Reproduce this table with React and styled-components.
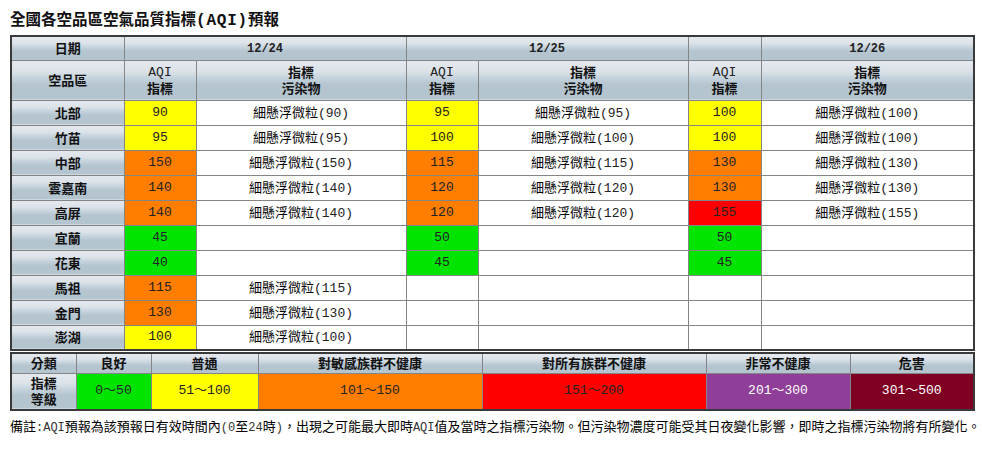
import React from "react";
import styled, { createGlobalStyle } from "styled-components";

const CJK = `"Noto Sans CJK TC", sans-serif`;
const MONO = `"Liberation Mono", "Noto Sans CJK TC", monospace`;

const Global = createGlobalStyle`
  html, body { margin: 0; padding: 0; background: #ffffff; }
  body { font-family: ${CJK}; color: #000; }
`;

const Page = styled.div`
  padding: 8px 0 0 10px;
  width: 963px;
`;

const Title = styled.h1`
  margin: 0 0 4px;
  font: bold 15.5px/20px ${CJK};
  color: #111;
  white-space: nowrap;
`;

const TitleLatin = styled.span`
  font-family: ${MONO};
  font-size: 16px;
  letter-spacing: 0.8px;
`;

const Table = styled.table`
  width: 963px;
  table-layout: fixed;
  border-collapse: collapse;
  border: 2px solid #3a3a3a;
  margin-top: ${(p) => p.$gap || 0}px;
`;

const Row = styled.tr`
  height: ${(p) => p.$h}px;
`;

const headerBg = `linear-gradient(to bottom, #e4e9ef 0%, #dbe2e8 28%, #c2d0da 48%, #b4c5d0 62%, #b4c5d0 100%)`;

const Head = styled.th`
  border: 1px solid #858585;
  background: ${headerBg};
  padding: 0;
  font: bold 13px/16px ${CJK};
  color: #111;
  text-align: center;
  vertical-align: middle;
`;

const DateText = styled.span`
  font: bold 12px/16px ${MONO};
  color: #222;
`;

const MonoLine = styled.span`
  display: block;
  font: 13px/15px ${MONO};
  font-weight: normal;
  color: #222;
`;

const Cell = styled.td`
  border: 1px solid #858585;
  background: ${(p) => p.$bg || "#ffffff"};
  padding: 0;
  text-align: center;
  vertical-align: middle;
  font: 13px/16px ${MONO};
  color: ${(p) => p.$fg || "#222"};
  white-space: nowrap;
`;

const Pollutant = styled.span`
  font-family: ${CJK};
  color: #000;
`;

const Note = styled.p`
  margin: 6px 0 0;
  font: 13px/18px ${CJK};
  color: #000;
  white-space: nowrap;
`;

const NoteLatin = styled.span`
  font: 12px/18px ${MONO};
  color: #333;
`;

const COLORS = {
  good: "#00e400",
  moderate: "#ffff00",
  usg: "#ff7e00",
  unhealthy: "#ff0000",
  very: "#8f3f97",
  hazard: "#7e0023",
};

const colorFor = (v) => {
  if (v == null) return "#ffffff";
  if (v <= 50) return COLORS.good;
  if (v <= 100) return COLORS.moderate;
  if (v <= 150) return COLORS.usg;
  if (v <= 200) return COLORS.unhealthy;
  if (v <= 300) return COLORS.very;
  return COLORS.hazard;
};

const P = "細懸浮微粒";

const regions = [
  ["北部", [[90, true], [95, true], [100, true]]],
  ["竹苗", [[95, true], [100, true], [100, true]]],
  ["中部", [[150, true], [115, true], [130, true]]],
  ["雲嘉南", [[140, true], [120, true], [130, true]]],
  ["高屏", [[140, true], [120, true], [155, true]]],
  ["宜蘭", [[45, false], [50, false], [50, false]]],
  ["花東", [[40, false], [45, false], [45, false]]],
  ["馬祖", [[115, true], [null, false], [null, false]]],
  ["金門", [[130, true], [null, false], [null, false]]],
  ["澎湖", [[100, true], [null, false], [null, false]]],
];

const legend = [
  ["良好", "0～50", COLORS.good, "#222"],
  ["普通", "51～100", COLORS.moderate, "#222"],
  ["對敏感族群不健康", "101～150", COLORS.usg, "#222"],
  ["對所有族群不健康", "151～200", COLORS.unhealthy, "#222"],
  ["非常不健康", "201～300", COLORS.very, "#ffffff"],
  ["危害", "301～500", COLORS.hazard, "#ffffff"],
];

const mainCols = [113, 72, 210, 72, 210, 73, 213];
const legendCols = [65, 75, 107, 224, 224, 144, 124];

export default function App() {
  return (
    <>
      <Global />
      <Page>
        <Title>
          全國各空品區空氣品質指標<TitleLatin>(AQI)</TitleLatin>預報
        </Title>
        <Table>
          <colgroup>
            {mainCols.map((w, i) => (
              <col key={i} style={{ width: w }} />
            ))}
          </colgroup>
          <thead>
            <Row $h={24}>
              <Head>日期</Head>
              <Head colSpan={2}>
                <DateText>12/24</DateText>
              </Head>
              <Head colSpan={2}>
                <DateText>12/25</DateText>
              </Head>
              <Head />
              <Head>
                <DateText>12/26</DateText>
              </Head>
            </Row>
            <Row $h={40}>
              <Head>空品區</Head>
              {[0, 1, 2].map((i) => (
                <React.Fragment key={i}>
                  <Head>
                    <MonoLine>AQI</MonoLine>指標
                  </Head>
                  <Head>
                    指標
                    <br />
                    污染物
                  </Head>
                </React.Fragment>
              ))}
            </Row>
          </thead>
          <tbody>
            {regions.map(([name, days]) => (
              <Row $h={25} key={name}>
                <Head>{name}</Head>
                {days.map(([v, hasP], i) => (
                  <React.Fragment key={i}>
                    <Cell $bg={colorFor(v)}>{v ?? ""}</Cell>
                    <Cell>
                      {hasP ? (
                        <>
                          <Pollutant>{P}</Pollutant>({v})
                        </>
                      ) : null}
                    </Cell>
                  </React.Fragment>
                ))}
              </Row>
            ))}
          </tbody>
        </Table>
        <Table $gap={1}>
          <colgroup>
            {legendCols.map((w, i) => (
              <col key={i} style={{ width: w }} />
            ))}
          </colgroup>
          <tbody>
            <Row $h={20}>
              <Head>分類</Head>
              {legend.map(([label]) => (
                <Head key={label}>{label}</Head>
              ))}
            </Row>
            <Row $h={37}>
              <Head>
                指標
                <br />
                等級
              </Head>
              {legend.map(([label, range, bg, fg]) => (
                <Cell key={label} $bg={bg} $fg={fg}>
                  {range}
                </Cell>
              ))}
            </Row>
          </tbody>
        </Table>
        <Note>
          備註<NoteLatin>:AQI</NoteLatin>預報為該預報日有效時間內<NoteLatin>(0</NoteLatin>至<NoteLatin>24</NoteLatin>時<NoteLatin>)</NoteLatin>，出現之可能最大即時<NoteLatin>AQI</NoteLatin>值及當時之指標污染物。但污染物濃度可能受其日夜變化影響，即時之指標污染物將有所變化。
        </Note>
      </Page>
    </>
  );
}
